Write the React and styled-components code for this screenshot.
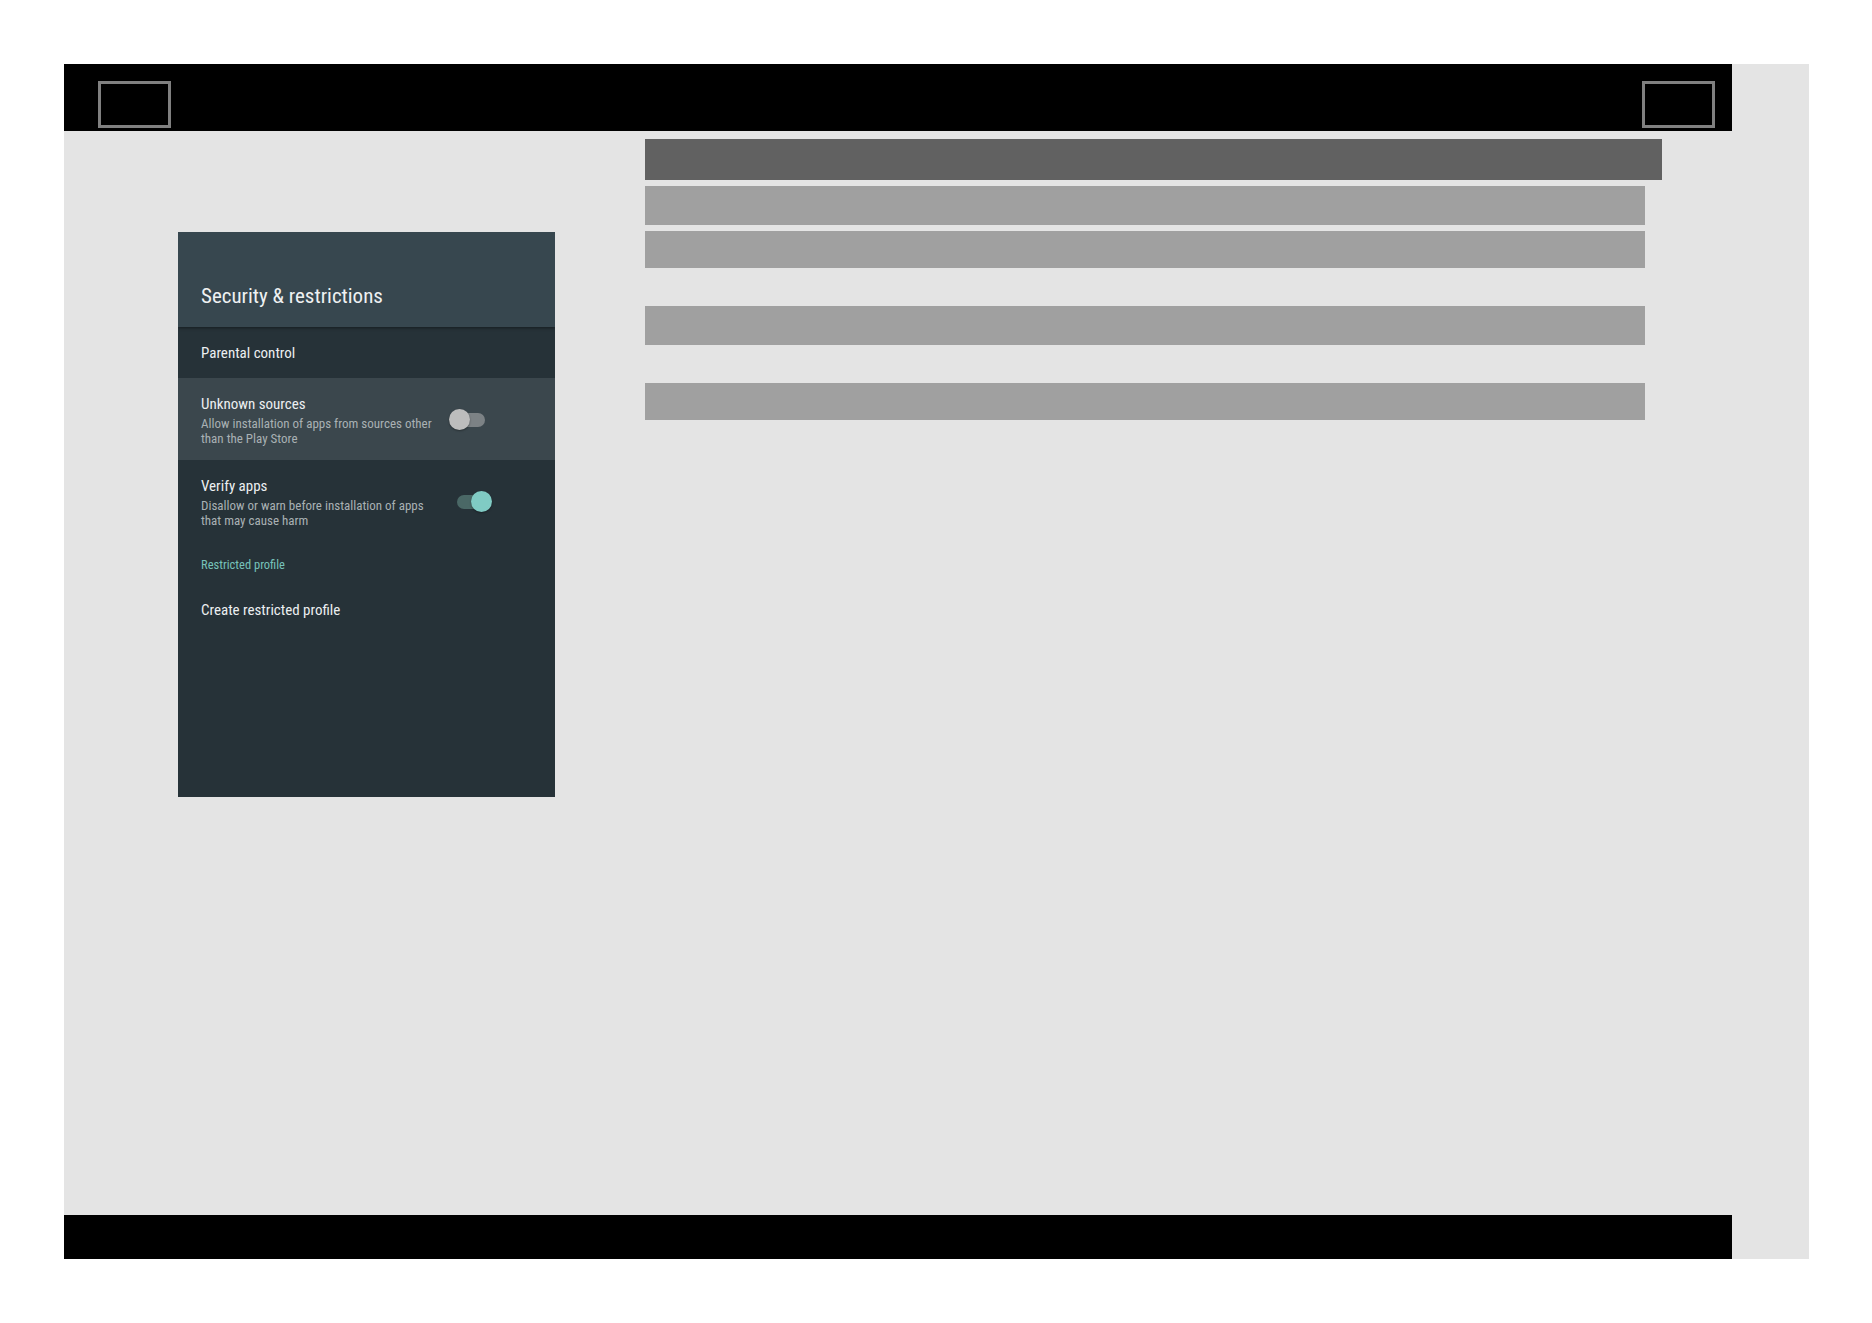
import React from 'react';
import styled, { createGlobalStyle } from 'styled-components';

const GlobalStyle = createGlobalStyle`
  html, body {
    margin: 0;
    padding: 0;
    background: #ffffff;
  }
  body {
    font-family: "Roboto Condensed", "Roboto", "Liberation Sans", sans-serif;
  }
`;

const Page = styled.div`
  padding: 64px 0 0 64px;
`;

const Frame = styled.div`
  width: 1745px;
  height: 1195px;
  background: #e4e4e4;
  display: flex;
  flex-direction: column;
`;

const TopBar = styled.div`
  width: 1668px;
  height: 67px;
  box-sizing: border-box;
  background: #000;
  display: flex;
  justify-content: space-between;
  align-items: flex-end;
  padding: 0 17px 3px 34px;
`;

const BarBox = styled.div`
  width: 73px;
  height: 47px;
  box-sizing: border-box;
  border: 3px solid #808080;
`;

const BottomBar = styled.div`
  width: 1668px;
  height: 44px;
  background: #000;
`;

const Body = styled.div`
  flex: 1;
  display: flex;
`;

const LeftCol = styled.div`
  padding: 101px 0 0 114px;
`;

const RightCol = styled.div`
  padding-top: 8px;
  margin-left: 90px;
  display: flex;
  flex-direction: column;
`;

const Bar = styled.div`
  width: ${(p) => p.$w}px;
  height: ${(p) => p.$h}px;
  margin-bottom: ${(p) => p.$gap}px;
  background: ${(p) => (p.$dark ? '#616161' : '#a0a0a0')};
`;

/* settings panel */
const Panel = styled.div`
  width: 377px;
  height: 565px;
  background: #263238;
  display: flex;
  flex-direction: column;
  overflow: hidden;
`;

const Header = styled.div`
  position: relative;
  z-index: 1;
  height: 95px;
  box-sizing: border-box;
  background: #37474f;
  padding: 0 23px 19px;
  display: flex;
  align-items: flex-end;
  box-shadow: 0 1px 3px rgba(0, 0, 0, 0.45);
`;

const Title = styled.h1`
  margin: 0;
  font-size: 21px;
  line-height: 24px;
  font-weight: 400;
  color: #eef1f2;
`;

const Row = styled.div`
  height: ${(p) => p.$h}px;
  box-sizing: border-box;
  padding: ${(p) => (p.$center ? '0 23px' : '16px 23px 0')};
  background: ${(p) => (p.$focused ? '#3b474d' : 'transparent')};
  display: flex;
  align-items: ${(p) => (p.$center ? 'center' : 'flex-start')};
`;

const TextCol = styled.div`
  width: 240px;
`;

const ItemTitle = styled.div`
  font-size: 15px;
  line-height: 20px;
  color: #eceff1;
`;

const ItemSub = styled.div`
  margin-top: 3px;
  font-size: 13px;
  line-height: 14.5px;
  color: #a9b1b4;
`;

const Category = styled.div`
  padding: 15px 23px 11px;
  font-size: 12.5px;
  line-height: 16px;
  color: #76c2ba;
`;

const SwitchWrap = styled.div`
  position: relative;
  width: 42px;
  height: 22px;
  margin: 15px 0 0 9px;
`;

const Track = styled.div`
  position: absolute;
  top: 4px;
  left: ${(p) => (p.$on ? 7 : 3)}px;
  width: 32px;
  height: 14px;
  border-radius: 7px;
  background: ${(p) => (p.$on ? '#4a6866' : '#7c8285')};
`;

const Thumb = styled.div`
  position: absolute;
  top: 0;
  left: ${(p) => (p.$on ? 21 : -1)}px;
  width: 21px;
  height: 21px;
  border-radius: 50%;
  background: ${(p) => (p.$on ? '#80cbc4' : '#bdbdbd')};
  box-shadow: 0 1px 2px rgba(0, 0, 0, 0.35);
`;

const Switch = ({ on }) => (
  <SwitchWrap>
    <Track $on={on} />
    <Thumb $on={on} />
  </SwitchWrap>
);

const bars = [
  { w: 1017, h: 41, gap: 6, dark: true },
  { w: 1000, h: 39, gap: 6 },
  { w: 1000, h: 37, gap: 38 },
  { w: 1000, h: 39, gap: 38 },
  { w: 1000, h: 37, gap: 0 },
];

const App = () => (
  <Page>
    <GlobalStyle />
    <Frame>
      <TopBar>
        <BarBox />
        <BarBox />
      </TopBar>
      <Body>
        <LeftCol>
          <Panel>
            <Header>
              <Title>Security &amp; restrictions</Title>
            </Header>
            <Row $h={51} $center>
              <ItemTitle>Parental control</ItemTitle>
            </Row>
            <Row $h={82} $focused>
              <TextCol>
                <ItemTitle>Unknown sources</ItemTitle>
                <ItemSub>Allow installation of apps from sources other than the Play Store</ItemSub>
              </TextCol>
              <Switch on={false} />
            </Row>
            <Row $h={82}>
              <TextCol>
                <ItemTitle>Verify apps</ItemTitle>
                <ItemSub>Disallow or warn before installation of apps that may cause harm</ItemSub>
              </TextCol>
              <Switch on />
            </Row>
            <Category>Restricted profile</Category>
            <Row $h={51} $center>
              <ItemTitle>Create restricted profile</ItemTitle>
            </Row>
          </Panel>
        </LeftCol>
        <RightCol>
          {bars.map((b, i) => (
            <Bar key={i} $w={b.w} $h={b.h} $gap={b.gap} $dark={b.dark} />
          ))}
        </RightCol>
      </Body>
      <BottomBar />
    </Frame>
  </Page>
);

export default App;
